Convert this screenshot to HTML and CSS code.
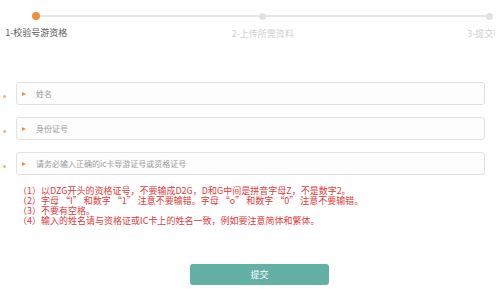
FILE: index.html
```html
<!DOCTYPE html>
<html lang="zh-CN">
<head>
<meta charset="utf-8">
<link rel="stylesheet" href="styles.css">
</head>
<body>
<div class="steps-wrap">
  <ol class="steps">
    <li class="step active"><span class="dot"></span><span class="label">1-校验号游资格</span></li>
    <li class="step"><span class="dot"></span><span class="label">2-上传所需资料</span></li>
    <li class="step"><span class="dot"></span><span class="label">3-提交审核</span></li>
  </ol>
</div>
<form class="form">
  <div class="row"><span class="star"></span><div class="field"><span class="tri"></span><span class="ph">姓名</span></div></div>
  <div class="row"><span class="star"></span><div class="field"><span class="tri"></span><span class="ph">身份证号</span></div></div>
  <div class="row"><span class="star"></span><div class="field"><span class="tri"></span><span class="ph">请务必输入正确的ic卡导游证号或资格证号</span></div></div>
  <div class="notes">
    <p>（1）以DZG开头的资格证号，不要输成D2G，D和G中间是拼音字母Z，不是数字2。</p>
    <p>（2）字母 “I” 和数字 “1” 注意不要输错。字母 “o” 和数字 “0” 注意不要输错。</p>
    <p>（3）不要有空格。</p>
    <p>（4）输入的姓名请与资格证或IC卡上的姓名一致，例如要注意简体和繁体。</p>
  </div>
  <div class="actions"><button type="button" class="submit">提交</button></div>
</form>
</body>
</html>
```
FILE: styles.css
```css
* { box-sizing: border-box; }
html, body { margin: 0; padding: 0; background: #fff; }
body {
  font-family: "Noto Sans CJK SC", "Noto Sans", sans-serif;
  font-size: 9px;
  color: #555;
  width: 503px;
  height: 289px;
  overflow: hidden;
}
.steps-wrap {
  width: 495px;
  height: 45px;
  overflow: hidden;
}
.steps {
  list-style: none;
  margin: 0 0 0 -77px;
  padding: 0;
  display: flex;
  position: relative;
}
.steps::before {
  content: "";
  position: absolute;
  left: 113px;
  width: 453px;
  top: 15px;
  height: 2px;
  background: #e6e6e6;
}
.step {
  width: 226.5px;
  flex: none;
  display: flex;
  flex-direction: column;
  align-items: center;
  position: relative;
}
.dot {
  width: 7px;
  height: 7px;
  margin-top: 12.5px;
  border-radius: 50%;
  background: #e2e2e2;
}
.step.active .dot {
  width: 8px;
  height: 8px;
  margin-top: 12px;
  background: #f0913a;
}
.label {
  margin-top: 8px;
  line-height: 12px;
  white-space: nowrap;
  color: #d0d0d0;
}
.step.active .label { color: #5a5a5a; margin-top: 7px; }

.form {
  margin: 37px 0 0 0;
  padding: 0;
}
.row {
  display: flex;
  align-items: center;
  height: 23px;
  margin-bottom: 12px;
}
.star {
  width: 3px;
  height: 3px;
  border-radius: 50%;
  background: #f3b37a;
  margin: 5px 0 0 3px;
  flex: none;
}
.field {
  margin-left: 10px;
  width: 469px;
  height: 23px;
  border: 1px solid #e2e2e2;
  border-radius: 3px;
  background: #fdfdfd;
  display: flex;
  align-items: center;
  padding-left: 5px;
}
.tri {
  width: 0;
  height: 0;
  border-top: 2.5px solid transparent;
  border-bottom: 2.5px solid transparent;
  border-left: 4px solid #f0913a;
  flex: none;
}
.ph {
  margin-left: 10px;
  font-size: 8px;
  color: #9a9a9a;
  white-space: nowrap;
}
.notes {
  margin: -1.5px 0 0 18px;
  color: #e23a3a;
  font-size: 9px;
  line-height: 10px;
}
.notes p { margin: 0; white-space: nowrap; }
.actions {
  margin-top: 38.5px;
  padding-left: 190px;
}
.submit {
  width: 139px;
  height: 21px;
  border: 0;
  border-radius: 3px;
  background: #63b0a5;
  color: #fff;
  font-family: inherit;
  font-size: 9px;
  padding: 0;
}
```
